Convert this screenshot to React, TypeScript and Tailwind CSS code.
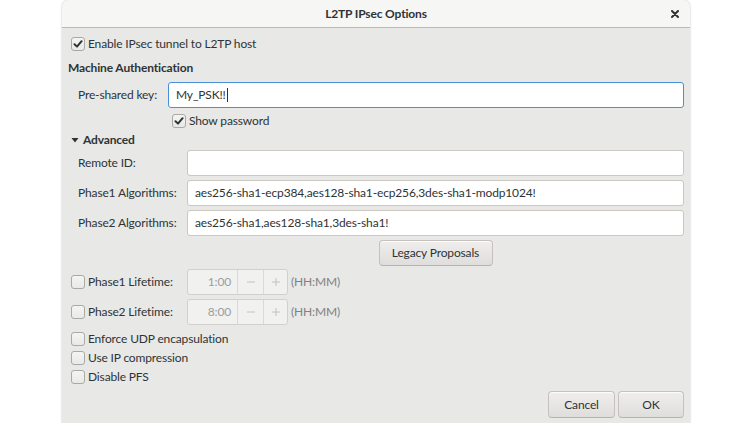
import React from "react";

const FONT = { fontFamily: "Lato, 'Noto Sans', sans-serif" };

function Check({ checked }: { checked?: boolean }) {
  return (
    <span className="flex h-[14px] w-[14px] shrink-0 items-center justify-center rounded-[3px] border border-[#a9a9a6] bg-gradient-to-b from-[#f4f4f3] to-[#e9e9e8]">
      {checked && (
        <svg width="10" height="10" viewBox="0 0 10 10">
          <path d="M1.5 5.2 L4 7.6 L8.6 2.2" fill="none" stroke="#2e3436" strokeWidth="2" strokeLinecap="round" strokeLinejoin="round" />
        </svg>
      )}
    </span>
  );
}

function CheckRow({ label, checked, className }: { label: string; checked?: boolean; className: string }) {
  return (
    <div className={`flex h-[16px] items-center gap-[3px] ${className}`}>
      <Check checked={checked} />
      <span>{label}</span>
    </div>
  );
}

function Field({ value }: { value?: string }) {
  return (
    <div className="flex h-[26px] flex-1 items-center rounded-[3px] border border-[#cdc7c2] bg-white px-[7px]">
      <span>{value}</span>
    </div>
  );
}

function FieldRow({ label, value, className }: { label: string; value?: string; className: string }) {
  return (
    <div className={`flex items-center pl-[10px] ${className}`}>
      <span className="w-[109px] shrink-0">{label}</span>
      <Field value={value} />
    </div>
  );
}

function Spin({ value }: { value: string }) {
  return (
    <div className="flex h-[26px] w-[101px] rounded-[3px] border border-[#d3cfcb] bg-[#f1f1f0] text-[#9a9d9e]">
      <div className="flex w-[49px] items-center justify-end pr-[6px]">{value}</div>
      <div className="flex w-[26px] items-center justify-center border-l border-[#dcd8d4] text-[#c0c2c2]">
        <svg width="10" height="10" viewBox="0 0 10 10">
          <path d="M1 5 H9" stroke="currentColor" strokeWidth="1" />
        </svg>
      </div>
      <div className="flex flex-1 items-center justify-center border-l border-[#dcd8d4] text-[#c0c2c2]">
        <svg width="10" height="10" viewBox="0 0 10 10">
          <path d="M1 5 H9 M5 1 V9" stroke="currentColor" strokeWidth="1" />
        </svg>
      </div>
    </div>
  );
}

function LifetimeRow({ label, value, className }: { label: string; value: string; className: string }) {
  return (
    <div className={`flex items-center pl-[3px] ${className}`}>
      <div className="flex w-[116px] items-center gap-[3px]">
        <Check />
        <span>{label}</span>
      </div>
      <Spin value={value} />
      <span className="ml-[3px] text-[#7f8283]">(HH:MM)</span>
    </div>
  );
}

function Button({ children, className }: { children: React.ReactNode; className: string }) {
  return (
    <div
      className={`flex items-center justify-center rounded-[4px] border border-[#c6c1bc] border-b-[#b8b2ac] bg-gradient-to-b from-[#efeeed] to-[#e0dedc] shadow-[inset_0_1px_0_rgba(255,255,255,0.8)] ${className}`}
    >
      {children}
    </div>
  );
}

export default function App() {
  return (
    <div className="h-[423px] w-[752px] overflow-hidden bg-white" style={FONT}>
      <div className="ml-[62px] flex h-[423px] w-[628px] flex-col rounded-t-[7px] bg-[#e8e8e7] text-[12px] tracking-[-0.15px] text-[#2e3436] shadow-[0_0_2px_rgba(0,0,0,0.3)]">
        {/* title bar */}
        <div className="relative flex h-[28px] shrink-0 items-center justify-center rounded-t-[7px] border-b border-[#bdbab6] bg-[#f6f6f5]">
          <span className="font-bold">L2TP IPsec Options</span>
          <svg className="absolute right-[11px] top-[10px]" width="8" height="8" viewBox="0 0 8 8">
            <path d="M1 1 L7 7 M7 1 L1 7" stroke="#2e3436" strokeWidth="2" strokeLinecap="round" />
          </svg>
        </div>

        <div className="flex flex-1 flex-col px-[6px]">
          <CheckRow className="mt-[8px] pl-[3px]" checked label="Enable IPsec tunnel to L2TP host" />

          <div className="mt-[8px] flex h-[16px] items-center font-bold">Machine Authentication</div>

          <div className="mt-[6px] flex items-center pl-[10px]">
            <span className="w-[90px] shrink-0">Pre-shared key:</span>
            <div className="flex h-[26px] flex-1 items-center rounded-[3px] border border-[#4a90d9] bg-white px-[7px]">
              <span>My_PSK!!</span>
              <span className="ml-[1px] h-[14px] w-px bg-[#2e3436]" />
            </div>
          </div>

          <CheckRow className="mt-[5px] pl-[104px]" checked label="Show password" />

          <div className="mt-[3px] flex h-[16px] items-center gap-[4px] pl-[3px] font-bold">
            <svg width="8" height="8" viewBox="0 0 8 8">
              <path d="M0.5 2 H7.5 L4 6.5 Z" fill="#2e3436" />
            </svg>
            <span>Advanced</span>
          </div>

          <FieldRow className="mt-[2px]" label="Remote ID:" />
          <FieldRow className="mt-[4px]" label="Phase1 Algorithms:" value="aes256-sha1-ecp384,aes128-sha1-ecp256,3des-sha1-modp1024!" />
          <FieldRow className="mt-[4px]" label="Phase2 Algorithms:" value="aes256-sha1,aes128-sha1,3des-sha1!" />

          <div className="mt-[4px] flex justify-center pl-[119px]">
            <Button className="h-[26px] w-[114px]">Legacy Proposals</Button>
          </div>

          <LifetimeRow className="mt-[3px]" label="Phase1 Lifetime:" value="1:00" />
          <LifetimeRow className="mt-[4px]" label="Phase2 Lifetime:" value="8:00" />

          <CheckRow className="mt-[6px] pl-[3px]" label="Enforce UDP encapsulation" />
          <CheckRow className="mt-[3px] pl-[3px]" label="Use IP compression" />
          <CheckRow className="mt-[3px] pl-[3px]" label="Disable PFS" />

          <div className="mt-[6px] flex justify-end gap-[3px]">
            <Button className="h-[27px] w-[67px]">Cancel</Button>
            <Button className="h-[27px] w-[66px]">OK</Button>
          </div>
        </div>
      </div>
    </div>
  );
}
